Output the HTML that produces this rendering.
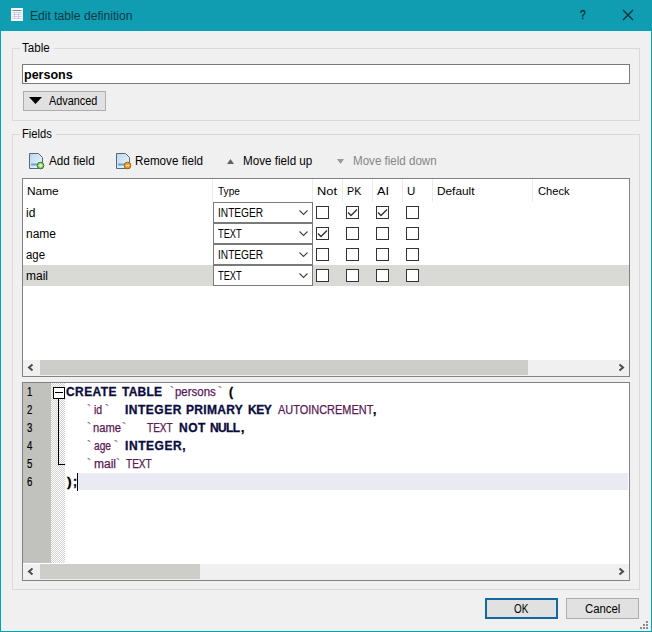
<!DOCTYPE html>
<html><head><meta charset="utf-8">
<style>
*{box-sizing:border-box;margin:0;padding:0}
html,body{width:652px;height:632px;overflow:hidden;background:#f0f0f0}
body{position:relative;font-family:"Liberation Sans",sans-serif;font-size:12px;color:#000}
.a{position:absolute}
.t{position:absolute;white-space:pre;line-height:1;transform-origin:0 0}
</style></head><body>
<div class="a" style="left:0px;top:0px;width:652px;height:31px;background:#109db2"></div>
<div class="a" style="left:0px;top:31px;width:1px;height:601px;background:#109db2"></div>
<div class="a" style="left:651px;top:31px;width:1px;height:601px;background:#109db2"></div>
<div class="a" style="left:0px;top:631px;width:652px;height:1px;background:#109db2"></div>
<div class="a" style="left:1px;top:31px;width:650px;height:1px;background:#dcfbff"></div>
<div class="a" style="left:1px;top:31px;width:1px;height:600px;background:#dcfbff"></div>
<div class="a" style="left:650px;top:31px;width:1px;height:600px;background:#dcfbff"></div>
<div class="a" style="left:1px;top:630px;width:650px;height:1px;background:#dcfbff"></div>
<svg class="a" style="left:11px;top:8px" width="12" height="13" viewBox="0 0 12 13">
<rect x="0" y="0" width="12" height="13" fill="#f4fcff"/>
<path d="M1.5 2.5h9" stroke="#7a86a0" stroke-width="1"/>
<path d="M1.5 4.5h9M1.5 6.5h9M1.5 8.5h9M1.5 10.5h9" stroke="#d4cce2" stroke-width="1"/>
<path d="M3.5 4v7M7.5 4v7" stroke="#d0c8e0" stroke-width="1"/>
</svg>
<div class="t" style="left:30px;top:10px;font-size:12px;color:#0b3944;transform:scaleX(1.010);">Edit table definition</div>
<div class="t" style="left:580px;top:8px;font-size:13px;color:#0b2a30;transform:scaleX(0.780);-webkit-text-stroke:0.3px #0b2a30;">?</div>
<svg class="a" style="left:622px;top:9px" width="12" height="12" viewBox="0 0 12 12"><path d="M1 1L11 11M11 1L1 11" stroke="#0b2a30" stroke-width="1.2"/></svg>
<div class="a" style="left:12px;top:48px;width:628px;height:73px;border:1px solid #d9d9d9"></div>
<div class="a" style="left:20px;top:40px;width:34px;height:14px;background:#f0f0f0"></div>
<div class="t" style="left:22px;top:42px;font-size:12px;transform:scaleX(0.964);">Table</div>
<div class="a" style="left:12px;top:134px;width:628px;height:456px;border:1px solid #d9d9d9"></div>
<div class="a" style="left:20px;top:126px;width:36px;height:14px;background:#f0f0f0"></div>
<div class="t" style="left:22px;top:128px;font-size:12px;transform:scaleX(0.935);">Fields</div>
<div class="a" style="left:22px;top:64px;width:608px;height:20px;border:1px solid #7a7a7a;background:#fff"></div>
<div class="t" style="left:24px;top:69px;font-size:12px;font-weight:bold;transform:scaleX(1.044);">persons</div>
<div class="a" style="left:23px;top:91px;width:83px;height:20px;border:1px solid #adadad;background:#e1e1e1"></div>
<svg class="a" style="left:29px;top:97px" width="13" height="7"><path d="M0 0H13L6.5 7Z" fill="#000"/></svg>
<div class="t" style="left:49px;top:95px;font-size:12px;transform:scaleX(0.906);">Advanced</div>
<svg class="a" style="left:28px;top:152px" width="18" height="18" viewBox="0 0 18 18">
<defs><linearGradient id="g28" x1="0" y1="0" x2="1" y2="1"><stop offset="0" stop-color="#bcd6ee"/><stop offset="1" stop-color="#eef6fc"/></linearGradient></defs>
<path d="M1.5 1.5H10.5L14.5 5.5V16.5H1.5Z" fill="url(#g28)" stroke="#56687e" stroke-width="1"/>
<path d="M3 12.5h6" stroke="#6aa2dc" stroke-width="2"/>
<circle cx="12.5" cy="13.5" r="3.3" fill="#8cd070" stroke="#3c7a24" stroke-width="1"/>
<path d="M10.7 13.5h3.6M12.5 11.7v3.6" stroke="#d8f8c8" stroke-width="1.3"/>
</svg>
<div class="t" style="left:49px;top:155px;font-size:12px;transform:scaleX(0.978);">Add field</div>
<svg class="a" style="left:115px;top:152px" width="18" height="18" viewBox="0 0 18 18">
<defs><linearGradient id="g115" x1="0" y1="0" x2="1" y2="1"><stop offset="0" stop-color="#bcd6ee"/><stop offset="1" stop-color="#eef6fc"/></linearGradient></defs>
<path d="M1.5 1.5H10.5L14.5 5.5V16.5H1.5Z" fill="url(#g115)" stroke="#56687e" stroke-width="1"/>
<path d="M3 12.5h6" stroke="#6aa2dc" stroke-width="2"/>
<circle cx="12.5" cy="13.5" r="3.3" fill="#e8a030" stroke="#9a6010" stroke-width="1"/>
<path d="M10.7 13.5h3.6" stroke="#ffe0a0" stroke-width="1.3"/>
</svg>
<div class="t" style="left:135px;top:155px;font-size:12px;transform:scaleX(0.971);">Remove field</div>
<svg class="a" style="left:227px;top:159px" width="7" height="5"><path d="M0 5H7L3.5 0Z" fill="#626262"/></svg>
<div class="t" style="left:243px;top:155px;font-size:12px;transform:scaleX(0.971);">Move field up</div>
<svg class="a" style="left:337px;top:159px" width="7" height="5"><path d="M0 0H7L3.5 5Z" fill="#9a9a9a"/></svg>
<div class="t" style="left:353px;top:155px;font-size:12px;color:#858585;transform:scaleX(0.965);">Move field down</div>
<div class="a" style="left:22px;top:178px;width:608px;height:199px;border:1px solid #828282;background:#fff"></div>
<div class="a" style="left:212px;top:179px;width:1px;height:23px;background:#ececec"></div>
<div class="a" style="left:312px;top:179px;width:1px;height:23px;background:#ececec"></div>
<div class="a" style="left:342px;top:179px;width:1px;height:23px;background:#ececec"></div>
<div class="a" style="left:372px;top:179px;width:1px;height:23px;background:#ececec"></div>
<div class="a" style="left:402px;top:179px;width:1px;height:23px;background:#ececec"></div>
<div class="a" style="left:432px;top:179px;width:1px;height:23px;background:#ececec"></div>
<div class="a" style="left:532px;top:179px;width:1px;height:23px;background:#ececec"></div>
<div class="t" style="left:27px;top:186px;font-size:11.5px;transform:scaleX(1.034);">Name</div>
<div class="t" style="left:218px;top:186px;font-size:11.5px;transform:scaleX(0.880);">Type</div>
<div class="t" style="left:317px;top:186px;font-size:11.5px;transform:scaleX(1.118);">Not</div>
<div class="t" style="left:347px;top:186px;font-size:11.5px;transform:scaleX(0.929);">PK</div>
<div class="t" style="left:377px;top:186px;font-size:11.5px;transform:scaleX(1.100);">AI</div>
<div class="t" style="left:407px;top:186px;font-size:11.5px;">U</div>
<div class="t" style="left:437px;top:186px;font-size:11.5px;transform:scaleX(1.028);">Default</div>
<div class="t" style="left:538px;top:186px;font-size:11.5px;transform:scaleX(0.969);">Check</div>
<div class="a" style="left:23px;top:265px;width:606px;height:21px;background:#d9d9d6"></div>
<div class="t" style="left:26px;top:207px;font-size:12px;">id</div>
<div class="a" style="left:213px;top:202px;width:100px;height:21px;border:1px solid #7a7a7a;background:#fff"></div>
<div class="t" style="left:218px;top:207px;font-size:12px;transform:scaleX(0.846);">INTEGER</div>
<svg class="a" style="left:299px;top:210px" width="10" height="6"><path d="M0.5 0.5L4.5 4.5L8.5 0.5" fill="none" stroke="#444" stroke-width="1.1"/></svg>
<div class="a" style="left:316px;top:206px;width:13px;height:13px;border:1px solid #333;background:#fff"></div>
<div class="a" style="left:346px;top:206px;width:13px;height:13px;border:1px solid #333;background:#fff"></div>
<svg class="a" style="left:346px;top:206px" width="13" height="13"><path d="M2 6.5L5 9.5L11 3.5" fill="none" stroke="#333" stroke-width="1.4"/></svg>
<div class="a" style="left:376px;top:206px;width:13px;height:13px;border:1px solid #333;background:#fff"></div>
<svg class="a" style="left:376px;top:206px" width="13" height="13"><path d="M2 6.5L5 9.5L11 3.5" fill="none" stroke="#333" stroke-width="1.4"/></svg>
<div class="a" style="left:406px;top:206px;width:13px;height:13px;border:1px solid #333;background:#fff"></div>
<div class="t" style="left:26px;top:228px;font-size:12px;">name</div>
<div class="a" style="left:213px;top:223px;width:100px;height:21px;border:1px solid #7a7a7a;background:#fff"></div>
<div class="t" style="left:218px;top:228px;font-size:12px;transform:scaleX(0.774);">TEXT</div>
<svg class="a" style="left:299px;top:231px" width="10" height="6"><path d="M0.5 0.5L4.5 4.5L8.5 0.5" fill="none" stroke="#444" stroke-width="1.1"/></svg>
<div class="a" style="left:316px;top:227px;width:13px;height:13px;border:1px solid #333;background:#fff"></div>
<svg class="a" style="left:316px;top:227px" width="13" height="13"><path d="M2 6.5L5 9.5L11 3.5" fill="none" stroke="#333" stroke-width="1.4"/></svg>
<div class="a" style="left:346px;top:227px;width:13px;height:13px;border:1px solid #333;background:#fff"></div>
<div class="a" style="left:376px;top:227px;width:13px;height:13px;border:1px solid #333;background:#fff"></div>
<div class="a" style="left:406px;top:227px;width:13px;height:13px;border:1px solid #333;background:#fff"></div>
<div class="t" style="left:26px;top:249px;font-size:12px;transform:scaleX(0.950);">age</div>
<div class="a" style="left:213px;top:244px;width:100px;height:21px;border:1px solid #7a7a7a;background:#fff"></div>
<div class="t" style="left:218px;top:249px;font-size:12px;transform:scaleX(0.846);">INTEGER</div>
<svg class="a" style="left:299px;top:252px" width="10" height="6"><path d="M0.5 0.5L4.5 4.5L8.5 0.5" fill="none" stroke="#444" stroke-width="1.1"/></svg>
<div class="a" style="left:316px;top:248px;width:13px;height:13px;border:1px solid #333;background:#fff"></div>
<div class="a" style="left:346px;top:248px;width:13px;height:13px;border:1px solid #333;background:#fff"></div>
<div class="a" style="left:376px;top:248px;width:13px;height:13px;border:1px solid #333;background:#fff"></div>
<div class="a" style="left:406px;top:248px;width:13px;height:13px;border:1px solid #333;background:#fff"></div>
<div class="t" style="left:26px;top:270px;font-size:12px;">mail</div>
<div class="a" style="left:213px;top:265px;width:100px;height:21px;border:1px solid #7a7a7a;background:#fff"></div>
<div class="t" style="left:218px;top:270px;font-size:12px;transform:scaleX(0.774);">TEXT</div>
<svg class="a" style="left:299px;top:273px" width="10" height="6"><path d="M0.5 0.5L4.5 4.5L8.5 0.5" fill="none" stroke="#444" stroke-width="1.1"/></svg>
<div class="a" style="left:316px;top:269px;width:13px;height:13px;border:1px solid #333;background:#fff"></div>
<div class="a" style="left:346px;top:269px;width:13px;height:13px;border:1px solid #333;background:#fff"></div>
<div class="a" style="left:376px;top:269px;width:13px;height:13px;border:1px solid #333;background:#fff"></div>
<div class="a" style="left:406px;top:269px;width:13px;height:13px;border:1px solid #333;background:#fff"></div>
<div class="a" style="left:23px;top:360px;width:606px;height:16px;background:#f0f0f0"></div>
<div class="a" style="left:40px;top:360px;width:488px;height:15px;background:#cdcdc9"></div>
<svg class="a" style="left:27px;top:363px" width="8" height="9"><path d="M5.5 1.5L2 4.5L5.5 7.5" fill="none" stroke="#4a4a4a" stroke-width="2"/></svg>
<svg class="a" style="left:617px;top:363px" width="8" height="9"><path d="M2.5 1.5L6 4.5L2.5 7.5" fill="none" stroke="#4a4a4a" stroke-width="2"/></svg>
<div class="a" style="left:22px;top:382px;width:608px;height:199px;border:1px solid #828282;background:#fff"></div>
<div class="a" style="left:23px;top:383px;width:28px;height:180px;background:#c1c1bd"></div>
<div class="a" style="left:51px;top:383px;width:14px;height:180px;background:repeating-conic-gradient(#d2d2d2 0 25%,#fff 0 50%) 0 0/2px 2px"></div>
<div class="a" style="left:78px;top:473px;width:550px;height:17px;background:#eaeaf2"></div>
<div class="t" style="left:27px;top:386px;font-size:12px;transform:scaleX(0.800);-webkit-text-stroke:0.2px #000;">1</div>
<div class="t" style="left:27px;top:404px;font-size:12px;transform:scaleX(0.800);-webkit-text-stroke:0.2px #000;">2</div>
<div class="t" style="left:27px;top:422px;font-size:12px;transform:scaleX(0.800);-webkit-text-stroke:0.2px #000;">3</div>
<div class="t" style="left:27px;top:440px;font-size:12px;transform:scaleX(0.800);-webkit-text-stroke:0.2px #000;">4</div>
<div class="t" style="left:27px;top:458px;font-size:12px;transform:scaleX(0.800);-webkit-text-stroke:0.2px #000;">5</div>
<div class="t" style="left:27px;top:476px;font-size:12px;transform:scaleX(0.800);-webkit-text-stroke:0.2px #000;">6</div>
<div class="a" style="left:53px;top:387px;width:12px;height:12px;border:1px solid #000;background:#fff"></div>
<div class="a" style="left:55px;top:392px;width:8px;height:1px;background:#000"></div>
<div class="a" style="left:58px;top:399px;width:1px;height:66px;background:#000"></div>
<div class="a" style="left:58px;top:464px;width:7px;height:1px;background:#000"></div>
<div class="t" style="left:66.0px;top:386px;font-size:12px;font-weight:bold;color:#0c0c40;letter-spacing:0.4px;-webkit-text-stroke:0.3px #0c0c40;">CREATE</div>
<div class="t" style="left:122.0px;top:386px;font-size:12px;font-weight:bold;color:#0c0c40;letter-spacing:0.25px;-webkit-text-stroke:0.3px #0c0c40;">TABLE</div>
<div class="t" style="left:170.0px;top:386px;font-size:12px;color:#8a6888;-webkit-text-stroke:0.25px #8a6888;">`</div>
<div class="t" style="left:175.045px;top:386px;font-size:12px;color:#5a1856;transform:scaleX(0.955);-webkit-text-stroke:0.25px #5a1856;">persons</div>
<div class="t" style="left:218.0px;top:386px;font-size:12px;color:#8a6888;-webkit-text-stroke:0.25px #8a6888;">`</div>
<div class="t" style="left:229.0px;top:386px;font-size:12px;font-weight:bold;-webkit-text-stroke:0.3px #000;">(</div>
<div class="t" style="left:87.0px;top:404px;font-size:12px;color:#8a6888;-webkit-text-stroke:0.25px #8a6888;">`</div>
<div class="t" style="left:94.125px;top:404px;font-size:12px;color:#5a1856;transform:scaleX(0.875);-webkit-text-stroke:0.25px #5a1856;">id</div>
<div class="t" style="left:105.0px;top:404px;font-size:12px;color:#8a6888;-webkit-text-stroke:0.25px #8a6888;">`</div>
<div class="t" style="left:125.0px;top:404px;font-size:12px;font-weight:bold;color:#0c0c40;letter-spacing:0.5px;-webkit-text-stroke:0.3px #0c0c40;">INTEGER</div>
<div class="t" style="left:186.0px;top:404px;font-size:12px;font-weight:bold;color:#0c0c40;letter-spacing:0.33px;-webkit-text-stroke:0.3px #0c0c40;">PRIMARY</div>
<div class="t" style="left:248.0px;top:404px;font-size:12px;font-weight:bold;color:#0c0c40;letter-spacing:-0.5px;-webkit-text-stroke:0.3px #0c0c40;">KEY</div>
<div class="t" style="left:278.0px;top:404px;font-size:12px;color:#5a1856;transform:scaleX(0.913);-webkit-text-stroke:0.25px #5a1856;">AUTOINCREMENT</div>
<div class="t" style="left:373.0px;top:404px;font-size:12px;font-weight:bold;-webkit-text-stroke:0.3px #000;">,</div>
<div class="t" style="left:87.0px;top:422px;font-size:12px;color:#8a6888;-webkit-text-stroke:0.25px #8a6888;">`</div>
<div class="t" style="left:93.069px;top:422px;font-size:12px;color:#5a1856;transform:scaleX(0.931);-webkit-text-stroke:0.25px #5a1856;">name</div>
<div class="t" style="left:122.0px;top:422px;font-size:12px;color:#8a6888;-webkit-text-stroke:0.25px #8a6888;">`</div>
<div class="t" style="left:147.0px;top:422px;font-size:12px;color:#5a1856;transform:scaleX(0.839);-webkit-text-stroke:0.25px #5a1856;">TEXT</div>
<div class="t" style="left:179.0px;top:422px;font-size:12px;font-weight:bold;color:#0c0c40;letter-spacing:0.5px;-webkit-text-stroke:0.3px #0c0c40;">NOT</div>
<div class="t" style="left:210.0px;top:422px;font-size:12px;font-weight:bold;color:#0c0c40;letter-spacing:-0.67px;-webkit-text-stroke:0.3px #0c0c40;">NULL</div>
<div class="t" style="left:241.0px;top:422px;font-size:12px;font-weight:bold;-webkit-text-stroke:0.3px #000;">,</div>
<div class="t" style="left:87.0px;top:440px;font-size:12px;color:#8a6888;-webkit-text-stroke:0.25px #8a6888;">`</div>
<div class="t" style="left:94.0px;top:440px;font-size:12px;color:#5a1856;transform:scaleX(0.850);-webkit-text-stroke:0.25px #5a1856;">age</div>
<div class="t" style="left:114.0px;top:440px;font-size:12px;color:#8a6888;-webkit-text-stroke:0.25px #8a6888;">`</div>
<div class="t" style="left:125.0px;top:440px;font-size:12px;font-weight:bold;color:#0c0c40;letter-spacing:0.57px;-webkit-text-stroke:0.3px #0c0c40;">INTEGER,</div>
<div class="t" style="left:87.0px;top:458px;font-size:12px;color:#8a6888;-webkit-text-stroke:0.25px #8a6888;">`</div>
<div class="t" style="left:94.0px;top:458px;font-size:12px;color:#5a1856;-webkit-text-stroke:0.25px #5a1856;">mail</div>
<div class="t" style="left:116.0px;top:458px;font-size:12px;color:#8a6888;-webkit-text-stroke:0.25px #8a6888;">`</div>
<div class="t" style="left:126.0px;top:458px;font-size:12px;color:#5a1856;transform:scaleX(0.839);-webkit-text-stroke:0.25px #5a1856;">TEXT</div>
<div class="t" style="left:67.0px;top:476px;font-size:12px;font-weight:bold;transform:scaleX(1.150);-webkit-text-stroke:0.3px #000;">)</div>
<div class="t" style="left:73.0px;top:476px;font-size:12px;font-weight:bold;-webkit-text-stroke:0.3px #000;">;</div>
<div class="a" style="left:77px;top:473px;width:1px;height:18px;background:#000"></div>
<div class="a" style="left:23px;top:564px;width:606px;height:16px;background:#f0f0f0"></div>
<div class="a" style="left:40px;top:564px;width:160px;height:15px;background:#cdcdc9"></div>
<svg class="a" style="left:27px;top:567px" width="8" height="9"><path d="M5.5 1.5L2 4.5L5.5 7.5" fill="none" stroke="#4a4a4a" stroke-width="2"/></svg>
<svg class="a" style="left:617px;top:567px" width="8" height="9"><path d="M2.5 1.5L6 4.5L2.5 7.5" fill="none" stroke="#4a4a4a" stroke-width="2"/></svg>
<div class="a" style="left:485px;top:598px;width:73px;height:21px;border:2px solid #1467a0;background:#e1e1e1"></div>
<div class="t" style="left:514px;top:603px;font-size:12px;transform:scaleX(0.824);">OK</div>
<div class="a" style="left:566px;top:598px;width:73px;height:21px;border:1px solid #adadad;background:#e1e1e1"></div>
<div class="t" style="left:585px;top:603px;font-size:12px;transform:scaleX(0.946);">Cancel</div>
<div class="a" style="left:646px;top:621px;width:2px;height:2px;background:#8c8c8c"></div>
<div class="a" style="left:643px;top:624px;width:2px;height:2px;background:#8c8c8c"></div>
<div class="a" style="left:646px;top:624px;width:2px;height:2px;background:#8c8c8c"></div>
<div class="a" style="left:640px;top:627px;width:2px;height:2px;background:#8c8c8c"></div>
<div class="a" style="left:643px;top:627px;width:2px;height:2px;background:#8c8c8c"></div>
<div class="a" style="left:646px;top:627px;width:2px;height:2px;background:#8c8c8c"></div>
</body></html>
